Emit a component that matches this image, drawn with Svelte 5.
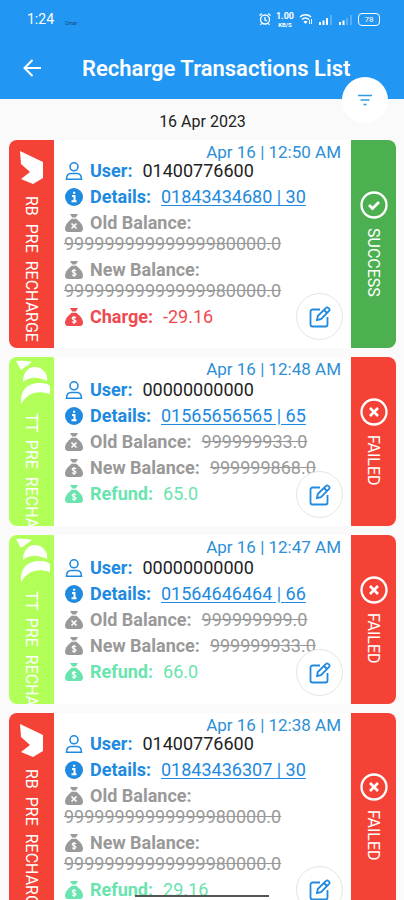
<script>
	const transactions = [
		{
			id: 1,
			operator: 'rb',
			service: 'RB  PRE  RECHARGE',
			time: 'Apr 16 | 12:50 AM',
			user: '01400776600',
			details: '01843434680 | 30',
			oldBalance: '99999999999999980000.0',
			newBalance: '99999999999999980000.0',
			kind: 'charge',
			amount: '-29.16',
			success: true
		},
		{
			id: 2,
			operator: 'tt',
			service: 'TT  PRE  RECHARGE',
			time: 'Apr 16 | 12:48 AM',
			user: '00000000000',
			details: '01565656565 | 65',
			oldBalance: '999999933.0',
			newBalance: '999999868.0',
			kind: 'refund',
			amount: '65.0',
			success: false
		},
		{
			id: 3,
			operator: 'tt',
			service: 'TT  PRE  RECHARGE',
			time: 'Apr 16 | 12:47 AM',
			user: '00000000000',
			details: '01564646464 | 66',
			oldBalance: '999999999.0',
			newBalance: '999999933.0',
			kind: 'refund',
			amount: '66.0',
			success: false
		},
		{
			id: 4,
			operator: 'rb',
			service: 'RB  PRE  RECHARGE',
			time: 'Apr 16 | 12:38 AM',
			user: '01400776600',
			details: '01843436307 | 30',
			oldBalance: '99999999999999980000.0',
			newBalance: '99999999999999980000.0',
			kind: 'refund',
			amount: '29.16',
			success: false
		}
	];
</script>

{#snippet bag(symbol)}
	<svg class="icon" viewBox="0 0 18 18" aria-hidden="true">
		<path d="M5 0h8l-2.2 3.6H7.2z" fill="currentColor" />
		<path
			d="M6.6 4.8h4.8C14 7 18 10.5 18 14.8c0 2-1 3.2-3 3.2H3c-2 0-3-1.2-3-3.2C0 10.5 4 7 6.6 4.8z"
			fill="currentColor"
		/>
		{#if symbol === 'x'}
			<path d="M6.5 9.5l5 5M11.5 9.5l-5 5" stroke="#fff" stroke-width="1.7" />
		{:else}
			<path
				d="M11 9.800c-1-1-3.800-.8-3.800.7 0 1.600 3.800.9 3.800 2.700 0 1.500-2.900 1.600-4 .5M9 8v8"
				fill="none"
				stroke="#fff"
				stroke-width="1.2"
			/>
		{/if}
	</svg>
{/snippet}

{#snippet balance(label, value, symbol)}
	<p class="grey" class:long={value.length > 15}>
		{@render bag(symbol)}<b>{label}</b> <s>{value}</s>
	</p>
{/snippet}

<div class="app">
	<header>
		<div class="status-bar">
			<span class="clock">1:24</span>
			<span class="brand">Omar</span>
			<div class="indicators">
				<svg width="12" height="14" viewBox="0 0 12 14" fill="none" stroke="currentColor" stroke-width="1.3">
					<circle cx="6" cy="7.5" r="4.5" />
					<path d="M6 5v3l2 1M.5 3.5L3 1.500M11.500 3.500L9 1.500M2.500 11.500L1.500 13M9.500 11.500l1 1.500" />
				</svg>
				<span class="speed"><b>1.00</b><small>KB/S</small></span>
				<svg width="14" height="12" viewBox="0 0 14 12" fill="none" stroke="currentColor">
					<path d="M1 4c3-3 8-3 11 0M3 6.5c2-2 5-2 7 0" stroke-width="1.6" />
					<path d="M6.5 11L4.500 8.500c1-1 3-1 4 0z" fill="currentColor" stroke="none" />
					<path d="M10.500 11V7M12.500 6v5" />
				</svg>
				<svg width="15" height="12" viewBox="0 0 15 12" stroke="currentColor" stroke-width="2">
					<path d="M2 12V9M5.500 12V7.500M9 12V5" />
					<path d="M13 12V2" opacity=".25" />
				</svg>
				<svg width="15" height="12" viewBox="0 0 15 12" stroke="currentColor" stroke-width="2">
					<path d="M2 12V9M5.500 12V7.500" />
					<path d="M9 12V5M13 12V2" opacity=".25" />
				</svg>
				<span class="battery">78</span>
			</div>
		</div>
		<div class="title-bar">
			<button class="back" aria-label="Back">
				<svg width="18" height="18" viewBox="0 0 18 18" fill="none" stroke="currentColor" stroke-width="2">
					<path d="M18 9H2M9.500 1L1.500 9l8 8" />
				</svg>
			</button>
			<h1>Recharge Transactions List</h1>
		</div>
		<button class="filter" aria-label="Filter">
			<svg width="16" height="12" viewBox="0 0 16 12" stroke="currentColor" stroke-width="1.6">
				<path d="M1 1.500h14M3.500 6h9M6.500 10.500h3" />
			</svg>
		</button>
	</header>

	<main>
		<h2>16 Apr 2023</h2>
		{#each transactions as t (t.id)}
			<article>
				<div class="service {t.operator}">
					<svg class="logo" viewBox="0 0 45 48" fill="currentColor" aria-hidden="true">
						{#if t.operator === 'rb'}
							<path d="M11 10l23 11v16l-10 6-12-5 9-7-9-8z" />
						{:else}
							<path d="M7 3q8-1 16 1l-11 8z" />
							<path d="M14 24C14 15 19 9 26 9c6 0 10 4 12 9v5c-8-4-17-5-24 1z" />
							<path d="M12 46c-1-13 5-21 19-21 5 0 8 1 10 3v8c-12-4-22-2-29 10z" />
						{/if}
					</svg>
					<span>{t.service}</span>
				</div>
				<div class="body">
					<time>{t.time}</time>
					<div class="rows">
						<p class="blue">
							<svg class="icon" viewBox="0 0 18 18" fill="none" stroke="currentColor" stroke-width="1.6">
								<circle cx="9" cy="4.8" r="4" />
								<path d="M1.500 17.200c0-4 2-5.700 4.500-5.700h6c2.500 0 4.500 1.700 4.500 5.700z" />
							</svg>
							<b>User:</b> <span class="user">{t.user}</span>
						</p>
						<p class="blue">
							<svg class="icon" viewBox="0 0 18 18">
								<circle cx="9" cy="9" r="9" fill="currentColor" />
								<path d="M7 8h2.500v5M6.500 13.300h5M8 4.800h2.200" fill="none" stroke="#fff" stroke-width="2" />
							</svg>
							<b>Details:</b> <a href="#details-{t.id}">{t.details}</a>
						</p>
						{@render balance('Old Balance:', t.oldBalance, 'x')}
						{@render balance('New Balance:', t.newBalance, '$')}
						<p class={t.kind}>
							{@render bag('$')}<b>{t.kind === 'charge' ? 'Charge:' : 'Refund:'}</b>
							<span>{t.amount}</span>
						</p>
					</div>
					<button class="edit" aria-label="Edit transaction">
						<svg width="22" height="22" viewBox="0 0 22 22" fill="none" stroke="currentColor" stroke-width="1.8">
							<path d="M11 3.500H3.500a2 2 0 0 0-2 2V18.500a2 2 0 0 0 2 2h13a2 2 0 0 0 2-2V11" />
							<path d="M8 14l.8-4L17 1.800a1.500 1.500 0 0 1 2.200 0l.9.9a1.500 1.500 0 0 1 0 2.200L12 13.200zM15 4l3 3" />
						</svg>
					</button>
				</div>
				<div class="result" class:success={t.success}>
					<svg width="28" height="28" viewBox="0 0 28 28" fill="none" stroke="currentColor">
						<circle cx="14" cy="14" r="12.5" stroke-width="2.3" />
						{#if t.success}
							<path d="M9 14l3.500 3.500L19 11" stroke-width="2.8" />
						{:else}
							<path d="M10 10l8 8M18 10l-8 8" stroke-width="2.6" />
						{/if}
					</svg>
					<span>{t.success ? 'SUCCESS' : 'FAILED'}</span>
				</div>
			</article>
		{/each}
	</main>
	<div class="home-bar"></div>
</div>

<style>
	:global(body) {
		background: #fafafa;
	}
	.app {
		height: 100vh;
		overflow: hidden;
		font-family: Roboto, sans-serif;
		font-size: 18px;
		color: #222;
	}
	button {
		display: flex;
		align-items: center;
		justify-content: center;
		padding: 0;
		border: none;
		background: none;
		color: inherit;
		cursor: pointer;
	}

	header {
		position: relative;
		padding-bottom: 8px;
		background: #2196f3;
		color: #fff;
	}
	.status-bar {
		display: flex;
		align-items: center;
		height: 38px;
		padding: 0 24px 0 27px;
	}
	.clock {
		font-size: 14px;
	}
	.brand {
		margin: 8px 0 0 11px;
		font-size: 5px;
		color: #134a7c;
	}
	.indicators {
		display: flex;
		align-items: center;
		gap: 5px;
		margin-left: auto;
	}
	.speed {
		display: flex;
		flex-direction: column;
		align-items: center;
		font-size: 9px;
		line-height: 10px;
	}
	.speed small {
		font-size: 6px;
		font-weight: 700;
		line-height: 7px;
	}
	.battery {
		width: 20px;
		border: 1px solid #fff;
		border-radius: 4px;
		font-size: 8px;
		line-height: 11px;
		text-align: center;
	}
	.title-bar {
		display: flex;
		align-items: center;
		height: 53px;
		padding: 7px 23px 0;
		box-sizing: border-box;
	}
	h1 {
		margin: 0 0 0 41px;
		font-size: 22px;
		font-weight: 600;
		white-space: nowrap;
	}
	.filter {
		position: absolute;
		right: 16px;
		bottom: -24px;
		width: 46px;
		height: 46px;
		border-radius: 50%;
		background: #fff;
		color: #2f9be0;
	}

	main {
		padding: 0 8px 0 9px;
	}
	h2 {
		margin: 0;
		padding: 12px 0 7px;
		font-size: 16px;
		font-weight: 400;
		line-height: 22px;
		text-align: center;
	}
	article {
		display: flex;
		min-height: 169px;
		margin-bottom: 9px;
		border-radius: 8px;
		background: #fff;
		overflow: hidden;
	}
	.service,
	.result {
		display: flex;
		flex: none;
		flex-direction: column;
		align-items: center;
		width: 45px;
		color: #fff;
		font-size: 16px;
	}
	.service span,
	.result span {
		writing-mode: vertical-rl;
		white-space: pre;
	}
	.service {
		contain: size;
		overflow: hidden;
	}
	.logo {
		flex: none;
		width: 45px;
		height: 48px;
		margin: 1px 0 7px;
	}
	.rb {
		background: #f44336;
	}
	.tt {
		background: #b2ff59;
	}
	.result {
		justify-content: center;
		gap: 9px;
		background: #f44336;
	}
	.success {
		background: #4caf50;
	}

	.body {
		display: flex;
		flex: 1;
		flex-direction: column;
		min-width: 0;
		position: relative;
		padding: 6px 10px 18px;
	}
	time {
		align-self: flex-end;
		font-size: 17px;
		line-height: 12px;
		color: #2e8fd6;
	}
	.rows {
		display: flex;
		flex: 1;
		flex-direction: column;
		justify-content: center;
	}
	p {
		display: flex;
		flex-wrap: wrap;
		align-items: center;
		margin: 0;
		line-height: 26px;
	}
	p b {
		margin-right: 10px;
	}
	.long s {
		margin-bottom: 5px;
		line-height: 16px;
	}
	.icon {
		width: 18px;
		height: 18px;
		margin: 0 7px 0 1px;
	}
	.blue,
	a {
		color: #2089e0;
	}
	a {
		text-underline-offset: 2px;
	}
	.user {
		color: #222;
	}
	.grey {
		color: #999;
	}
	.charge {
		color: #ef4a50;
	}
	.refund {
		color: #69e4ae;
	}
	.edit {
		position: absolute;
		right: 8px;
		bottom: 8px;
		width: 47px;
		height: 47px;
		border: 1px solid #e4e4e8;
		border-radius: 50%;
		background: #fff;
		color: #2089e0;
	}
	.home-bar {
		position: fixed;
		bottom: 3px;
		left: 50%;
		width: 134px;
		height: 2px;
		margin-left: -67px;
		background: #555;
	}
</style>
